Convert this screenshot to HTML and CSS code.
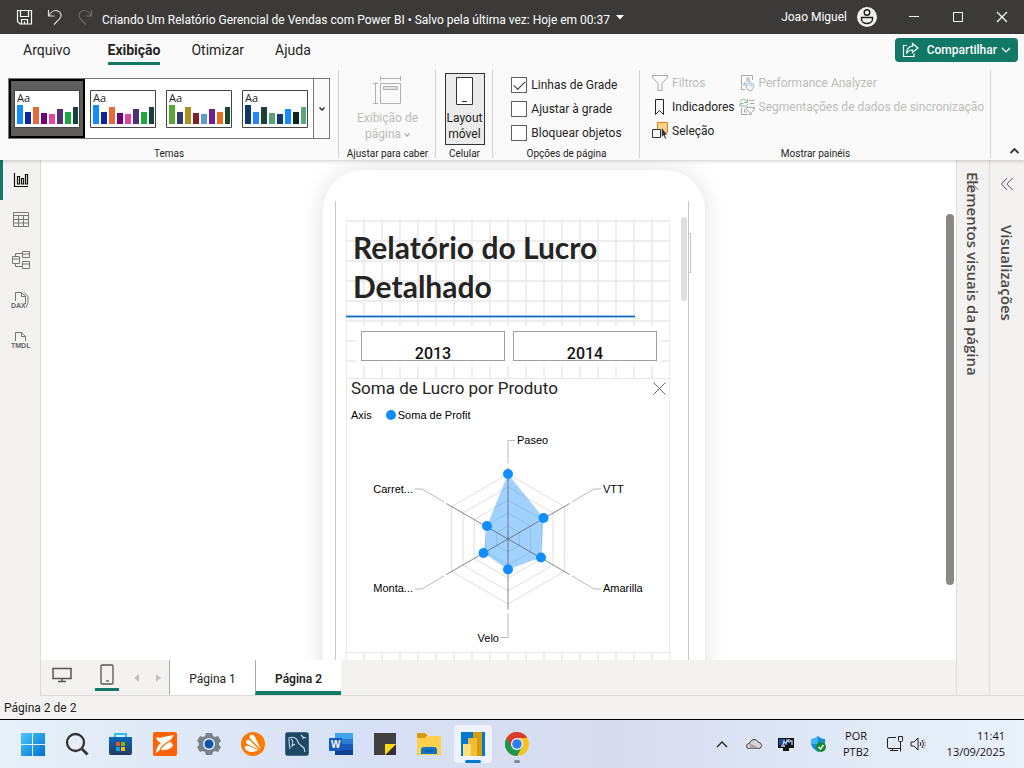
FILE: index.html
```html
<!DOCTYPE html>
<html lang="pt-BR">
<head>
<meta charset="utf-8">
<meta name="viewport" content="width=device-width, initial-scale=1">
<title>Criando Um Relatório Gerencial de Vendas com Power BI</title>
<link rel="stylesheet" href="styles.css">
</head>
<body>
<div class="desktop">
<header class="titlebar">
  <div class="quick">
    <button aria-label="Salvar"><svg width="18" height="18" viewBox="0 0 18 18" fill="none" stroke="#fff" stroke-width="1.2"><path d="M1.500 2.500h14v13.500H4l-2.500-2.500zM4.500 2.500v6h8v-6M5.500 16v-4.500h6V16M8.500 16v-2.500"/></svg></button>
    <button aria-label="Desfazer"><svg width="18" height="18" viewBox="0 0 18 18" fill="none" stroke="#ddd" stroke-width="1.2"><path d="M2.500 2v6h6M2.500 8C5 3.500 9 1.500 12.500 3.200c3 1.600 3.300 5.300 1 7.600L8 16.500"/></svg></button>
    <button aria-label="Refazer"><svg width="18" height="18" viewBox="0 0 18 18" fill="none" stroke="#6d6b69" stroke-width="1.200"><path d="M15.500 2v6h-6M15.500 8C13 3.500 9 1.500 5.500 3.200c-3 1.600-3.300 5.300-1 7.600L10 16.500"/></svg></button>
  </div>
  <h1 class="doc-title">Criando Um Relatório Gerencial de Vendas com Power BI • Salvo pela última vez: Hoje em 00:37</h1>
  <button class="title-caret" aria-label="Opções do arquivo"><svg width="8" height="5" viewBox="0 0 8 5"><path d="M0 0h8L4 4.500z" fill="#fff"/></svg></button>
  <div class="account"><span>Joao Miguel</span>
    <svg width="20" height="20" viewBox="0 0 20 20"><circle cx="10" cy="10" r="10" fill="#f3f2f1"/><g fill="none" stroke="#222" stroke-width="1.400"><circle cx="10" cy="5.500" r="2.800"/><path d="M4.500 10.500h11v1.500c0 6-11 6-11 0z"/></g></svg>
  </div>
  <div class="window-buttons">
    <button aria-label="Minimizar"><svg width="12" height="12" stroke="#fff"><path d="M1 5.500h10"/></svg></button>
    <button aria-label="Maximizar"><svg width="12" height="12" stroke="#fff" fill="none"><path d="M1.500 1.500h9v9h-9z"/></svg></button>
    <button aria-label="Fechar"><svg width="12" height="12" stroke="#fff" stroke-width="1.200"><path d="M1 1l10 10M11 1L1 11"/></svg></button>
  </div>
</header>

<div class="ribbon">
  <div class="menu">
    <nav class="menu-tabs">
      <a href="#">Arquivo</a><a href="#" class="active">Exibição</a><a href="#">Otimizar</a><a href="#">Ajuda</a>
    </nav>
    <button class="share"><svg width="17" height="16" viewBox="0 0 17 16" fill="none" stroke="#fff" stroke-width="1.200"><path d="M5 3.500H1.500v11H12v-3M10.500 1.500L16 6l-5.500 4.500V8C8 8 6 9 4.500 11.500 4.700 7 7 4.500 10.500 4.200z"/></svg><span>Compartilhar</span><svg width="10" height="6" fill="none" stroke="#fff" stroke-width="1.200"><path d="M1 1l4 4 4-4"/></svg></button>
  </div>
  <div class="groups">
    <section class="group themes">
      <div class="gallery">
        <button class="theme selected"><svg viewBox="0 0 66 38" width="66" height="38"><path d="M.5.5h65v37H.5z" fill="#fff" stroke="#444"/><text x="3" y="12">Aa</text><path fill="#118dff" d="M3 15h6v19H3z"/><path fill="#12239e" d="M11 22h6v12h-6z"/><path fill="#e66c37" d="M19 17h6v17h-6z"/><path fill="#6b007b" d="M27 23h6v11h-6z"/><path fill="#e044a7" d="M35 24h6v10h-6z"/><path fill="#502f78" d="M43 19h6v15h-6z"/><path fill="#1aab40" d="M51 22h6v12h-6z"/><path fill="#15423c" d="M59 17h5v17h-5z"/></svg></button>
        <button class="theme"><svg viewBox="0 0 66 38" width="66" height="38"><path d="M.5.5h65v37H.5z" fill="#fff" stroke="#444"/><text x="3" y="12">Aa</text><path fill="#118dff" d="M3 15h6v19H3z"/><path fill="#12239e" d="M11 22h6v12h-6z"/><path fill="#e66c37" d="M19 17h6v17h-6z"/><path fill="#6b007b" d="M27 23h6v11h-6z"/><path fill="#e044a7" d="M35 24h6v10h-6z"/><path fill="#502f78" d="M43 19h6v15h-6z"/><path fill="#1aab40" d="M51 22h6v12h-6z"/><path fill="#15423c" d="M59 17h5v17h-5z"/></svg></button>
        <button class="theme"><svg viewBox="0 0 66 38" width="66" height="38"><path d="M.5.5h65v37H.5z" fill="#fff" stroke="#444"/><text x="3" y="12">Aa</text><path fill="#5aa832" d="M3 15h6v19H3z"/><path fill="#303a6b" d="M11 22h6v12h-6z"/><path fill="#b08f1f" d="M19 17h6v17h-6z"/><path fill="#7f1f27" d="M27 23h6v11h-6z"/><path fill="#5f9ad3" d="M35 24h6v10h-6z"/><path fill="#6b1f90" d="M43 19h6v15h-6z"/><path fill="#e8701a" d="M51 22h6v12h-6z"/><path fill="#174a2c" d="M59 17h5v17h-5z"/></svg></button>
        <button class="theme"><svg viewBox="0 0 66 38" width="66" height="38"><path d="M.5.5h65v37H.5z" fill="#fff" stroke="#444"/><text x="3" y="12">Aa</text><path fill="#10396b" d="M3 15h6v19H3z"/><path fill="#2387ff" d="M11 22h6v12h-6z"/><path fill="#1b423c" d="M19 17h6v17h-6z"/><path fill="#57a472" d="M27 23h6v11h-6z"/><path fill="#10396b" d="M35 24h6v10h-6z"/><path fill="#118dff" d="M43 19h6v15h-6z"/><path fill="#0d2523" d="M51 22h6v12h-6z"/><path fill="#5aa87a" d="M59 17h5v17h-5z"/></svg></button>
        <button class="more" aria-label="Mais temas"><svg width="6" height="4" fill="none" stroke="#333" stroke-width="1.500"><path d="M.5.5L3 3 5.500.5"/></svg></button>
      </div>
      <h2>Temas</h2>
    </section>
    <section class="group">
      <button class="big disabled" disabled><svg width="30" height="30" fill="none" stroke="#b3b1af"><path d="M8.500 7.500h20v20h-20zM8.500 0v5M28.500 0v5M8.500 2.500h20M1 7.500h5M1 27.500h5M3.500 7.500v20"/><path d="M11.500 10.500h14v3h-14z" fill="#e3e2e1"/></svg><span>Exibição de<br>página <svg width="6" height="4" fill="none" stroke="#b3b1af" stroke-width="1.500"><path d="M.5.5L3 3 5.500.5"/></svg></span></button>
      <h2>Ajustar para caber</h2>
    </section>
    <section class="group">
      <button class="big pressed"><svg width="18" height="30" fill="#fff" stroke="#333"><path d="M.5 1.500h16v27H.500zM6 25.500h5"/></svg><span>Layout<br>móvel</span></button>
      <h2>Celular</h2>
    </section>
    <section class="group checks">
      <div class="rows">
        <label><input type="checkbox" checked>Linhas de Grade</label>
        <label><input type="checkbox">Ajustar à grade</label>
        <label><input type="checkbox">Bloquear objetos</label>
      </div>
      <h2>Opções de página</h2>
    </section>
    <section class="group panes">
      <div class="columns">
        <div class="rows">
          <button disabled><svg width="16" height="18" fill="none" stroke="#aaa8a6"><path d="M.5 1.500h15v2L10 9.500v7H6v-7L.5 3.500z"/></svg>Filtros</button>
          <button><svg width="16" height="18" fill="none" stroke="#252423"><path d="M3.500 1.500h8v15l-4-4-4 4z"/></svg>Indicadores</button>
          <button><svg width="16" height="18"><path d="M5.500.5h10v10h-10z" fill="#ffd28a" stroke="#e07a10"/><path d="M.5 7.500h8v8h-8z" fill="#fafafa" stroke="#333"/><path d="M9.500 5v10.500l2-2 1.500 3.500 1.500-.7-1.500-3.300h2.500z" fill="#333" stroke="#fff" stroke-width=".5"/></svg>Seleção</button>
        </div>
        <div class="rows">
          <button disabled><svg width="16" height="18" fill="none" stroke="#aaa8a6"><path d="M6 15.500H2.500v-14h11V6M5 12V9h2v3M8 8V4h2v4"/><g stroke="#88c0e5"><circle cx="11" cy="13" r="3.500"/><path d="M9.500 8h3M11 13l2-2M14 9l1 1"/></g></svg>Performance Analyzer</button>
          <button disabled><svg width="16" height="18" fill="none" stroke="#aaa8a6"><path d="M10 2.500h5.500M11 5.500h4.500M2.500 9.500v7H9M5.500 11v3H8M7 9.500h8.500v2l-3 3v2h-2v-2L7 11z"/><path stroke="#86bd91" d="M1 4c1.500-4 6-3 7 0M8.500 1v3.500H5M9 6C7 9 3 9 1.500 6M1 9V5.500h3.500"/></svg>Segmentações de dados de sincronização</button>
        </div>
      </div>
      <h2>Mostrar painéis</h2>
    </section>
    <button class="collapse" aria-label="Recolher faixa"><svg width="9" height="6" fill="none" stroke="#333" stroke-width="1.800"><path d="M.5 5l4-4 4 4"/></svg></button>
  </div>
</div>

<main class="workspace">
  <nav class="rail">
    <button class="active" aria-label="Relatório"><svg width="18" height="18" fill="none" stroke="#111" stroke-width="1.200"><path d="M2.500 2v13.500H16M5.500 13V5.500h2V13zM9.500 13V7.500h2V13zM13.500 13V3.500h2V13z"/></svg></button>
    <button aria-label="Tabela"><svg width="18" height="18" fill="none" stroke="#777"><path d="M1.500 1.500h15v14h-15zM1.500 4.500h15M1.500 8.500h15M1.500 12h15M6.500 4.500v11M11.500 4.500v11"/></svg></button>
    <button aria-label="Modelo"><svg width="20" height="20" fill="none" stroke="#777"><path d="M1.500 6.500h7v7h-7zM1.500 9h7M11.500 1.500h7v6h-7zM11.500 4h7M11.500 11.500h7v7h-7zM11.500 14h7M4.500 6.500v-3h7M4.500 13.500v3h7"/></svg></button>
    <button aria-label="Consultas DAX"><svg width="20" height="20" viewBox="0 0 20 20" fill="none" stroke="#777"><path d="M4.500 11V2.500h6l4 4V14M10.500 2.500v4h4M13 2.500l4 4v6l-2 5"/><text x="0" y="18">DAX</text></svg></button>
    <button aria-label="TMDL"><svg width="20" height="20" viewBox="0 0 20 20" fill="none" stroke="#777"><path d="M4.500 11V2.500h6l4 4V11M10.500 2.500v4h4"/><text x="0" y="18">TMDL</text></svg></button>
  </nav>
  <div class="center">
    <div class="canvas">
      <div class="phone">
        <div class="screen">
          <div class="page">
            <h2 class="report-title">Relatório do Lucro Detalhado</h2>
            <div class="rule"></div>
            <div class="slicer"><button>2013</button><button>2014</button></div>
            <article class="chart">
              <header><h3>Soma de Lucro por Produto</h3><button aria-label="Remover"><svg width="13" height="13" stroke="#666"><path d="M.5.5l12 12M12.500.5l-12 12"/></svg></button></header>
              <p class="legend"><span>Axis</span><i></i><span>Soma de Profit</span></p>
              <svg class="radar" viewBox="0 0 322 222">
                <g fill="none" stroke="#dedede">
                  <path d="M161 96l11.300 6.500v13L161 122l-11.300-6.500v-13z"/>
                  <path d="M161 83l22.500 13v26L161 135l-22.500-13V96z"/>
                  <path d="M161 70l33.800 19.500v39L161 148l-33.800-19.500v-39z"/>
                  <path d="M161 57l45 26v52l-45 26-45-26V83z"/>
                  <path d="M161 44l56.300 32.500v65L161 174l-56.300-32.500v-65z"/>
                </g>
                <path d="M161 44l35.500 44-2.500 39.500-33 12-24.500-16.500 3.500-27z" fill="#118dff" fill-opacity=".4"/>
                <path d="M161 37.500v142M99.300 73.500l123.400 71M222.700 73.500l-123.400 71" stroke="#555" stroke-opacity=".7"/>
                <path d="M161 33.500V10.500h7M225 72l22-13h7M225 146l22 13h7M161 183.500V207.500h-7M97 72L75 59h-7M97 146l-22 13h-7" fill="none" stroke="#bbb"/>
                <g fill="#118dff"><circle cx="161" cy="44" r="5"/><circle cx="196.500" cy="88" r="5"/><circle cx="194" cy="127.500" r="5"/><circle cx="161" cy="139.500" r="5"/><circle cx="136.500" cy="123" r="5"/><circle cx="140" cy="96" r="5"/></g>
                <g class="labels"><text x="170" y="14">Paseo</text><text x="256" y="63">VTT</text><text x="256" y="162">Amarilla</text><text class="end" x="152" y="212">Velo</text><text class="end" x="66" y="162">Monta...</text><text class="end" x="66" y="63">Carret...</text></g>
              </svg>
            </article>
          </div>
          <div class="screen-thumb"></div>
        </div>
        <div class="side-key"></div>
      </div>
      <div class="canvas-thumb"></div>
    </div>
    <div class="page-tabs">
      <button class="view" aria-label="Área de trabalho"><svg width="20" height="18" fill="none" stroke="#555" stroke-width="1.500"><path d="M1 1.500h18v10H1zM10 12v2.500M6 14.500h8"/></svg></button>
      <button class="view active" aria-label="Celular"><svg width="14" height="22" fill="none" stroke="#555" stroke-width="1.300"><rect x="1" y="2" width="12" height="19" rx="1"/><path d="M6 18h3"/></svg></button>
      <button class="step" aria-label="Anterior"><svg width="5" height="8" fill="#c4c2c0"><path d="M5 0v8L0 4z"/></svg></button>
      <button class="step" aria-label="Próxima"><svg width="5" height="8" fill="#c4c2c0"><path d="M0 0v8l5-4z"/></svg></button>
      <button class="tab">Página 1</button>
      <button class="tab current">Página 2</button>
    </div>
  </div>
  <aside class="pane"><svg width="12" height="12" fill="none" stroke="#777"><path d="M6 0L.5 6 6 12M11.500 0L6 6l5.500 6"/></svg><h2>Elementos visuais da página</h2></aside>
  <aside class="pane visual"><svg width="12" height="12" fill="none" stroke="#4a4a8a"><path d="M6 0L.5 6 6 12M11.500 0L6 6l5.500 6"/></svg><h2>Visualizações</h2></aside>
</main>
<footer class="status">Página 2 de 2</footer>

<div class="taskbar">
  <div class="apps">
    <button aria-label="Iniciar"><svg width="24" height="24"><defs><linearGradient id="win" x2="1" y2="1"><stop stop-color="#4cc8fa"/><stop offset="1" stop-color="#0070cf"/></linearGradient></defs><path fill="url(#win)" d="M0 1h11v11H0zM12 1h12v11H12zM0 13h11v11H0zM12 13h12v11H12z"/></svg></button>
    <button aria-label="Pesquisar"><svg width="24" height="24" fill="none" stroke="#333" stroke-width="2.300"><circle cx="10.500" cy="10.500" r="8.500" fill="#e8eef8"/><path d="M17 17l5.500 5.500" stroke-width="2.800"/></svg></button>
    <button aria-label="Microsoft Store"><svg width="24" height="24"><defs><linearGradient id="store" x2="0" y2="1"><stop stop-color="#0669ba"/><stop offset="1" stop-color="#253a63"/></linearGradient></defs><path d="M6 7V2h11v5" fill="none" stroke="#31bdf2" stroke-width="2"/><path d="M0 5h23v16q0 2-2 2H2q-2 0-2-2z" fill="url(#store)"/><path fill="#f25022" d="M7 10h4v4H7z"/><path fill="#7fba00" d="M12 10h4v4h-4z"/><path fill="#00a4ef" d="M7 15h4v4H7z"/><path fill="#ffb900" d="M12 15h4v4h-4z"/></svg></button>
    <button aria-label="Foxit"><svg width="24" height="24"><rect width="24" height="24" rx="2" fill="#ff6200"/><path fill="#fff" d="M3 5c5 2 10-1 18-2-2 3-3 5-5 6 2 1 3 2 4 4-2 5-8 5-13 5l-4 3c0-4 2-8 5-10-3-1-4-3-5-6z"/><path d="M7 18c2-4 6-7 10-9" fill="none" stroke="#ff6200" stroke-width="1.300"/></svg></button>
    <button aria-label="Configurações"><svg width="24" height="24"><path fill="#77818c" d="M9 1h6l1 3 2 1 3-1 3 5-2 2v2l2 2-3 5-3-1-2 1-1 3H9l-1-3-2-1-3 1-3-5 2-2v-2L0 9l3-5 3 1 2-1z"/><circle cx="12" cy="12" r="6" fill="#e8edf5"/><circle cx="12" cy="12" r="4.500" fill="#0b55a9"/></svg></button>
    <button aria-label="Avast"><svg width="24" height="24"><circle cx="12" cy="12" r="12" fill="#ff7800"/><path fill="#fff" d="M9.500 3c1.500-1.500 3.500 0 4.500 2l6 12.500L9.500 7C8 5.500 8.300 4 9.500 3zM5.500 8.500c1-1.200 2.500-.8 4 .5l9 9-11.500-5.500c-2-1-2.500-2.800-1.500-4zM4 14.500c.8-1.200 2.500-1 4.500-.3l8.500 4c-4 2.300-9 2.300-12-.2C3.700 17 3.300 15.500 4 14.500z"/></svg></button>
    <button aria-label="MySQL Workbench"><svg width="24" height="24"><rect x=".5" y=".5" width="23" height="23" rx="2" fill="#1d4866" stroke="#416d8b"/><path d="M5 17c-1-4-1-7-1-11 4-2 8 0 9 4 1 3 4 4 6 6l1 4M6 7c2 1 2 4 1 7l3-2M16 3l2 2 3 1M18 5v2" fill="none" stroke="#c9dce6" stroke-width="1.100"/></svg></button>
    <button aria-label="Word"><svg width="24" height="24"><path fill="#41a5ee" d="M6 1h18v6H6z"/><path fill="#2b7cd3" d="M6 7h18v5H6z"/><path fill="#185abd" d="M6 12h18v6H6z"/><path fill="#103f91" d="M6 18h18v5H6z"/><rect y="6" width="13" height="13" rx="1" fill="#185abd"/><text x="2" y="16" class="word">W</text></svg></button>
    <button aria-label="Notas Autoadesivas"><svg width="24" height="24"><path fill="#404040" d="M1 1h22v11L12 23H1z"/><path fill="#333" d="M12 23h11V12z"/><path fill="#ffda10" d="M12 12h11L12 23z"/></svg></button>
    <button aria-label="Explorador de Arquivos"><svg width="24" height="24"><path fill="#d99a0b" d="M0 1h8l3 3h-2v8H0z"/><path fill="#ffd04b" d="M0 6h8l3-2h13v19H0z"/><path fill="#1273c4" d="M4 22v-4q0-3 3-3h10q3 0 3 3v4z"/><path d="M8 19h8" stroke="#0a4f92"/></svg></button>
    <button class="open" aria-label="Power BI Desktop"><svg width="24" height="24"><path fill="#0078d4" d="M0 0h24v24H0z"/><path fill="#d99a0b" d="M12 0h9v24h-9z"/><path fill="#f0bd35" d="M7 6h9v18H7z"/><path fill="#fbe07c" d="M2 12h8v12H2z"/></svg></button>
    <button class="running" aria-label="Google Chrome"><svg width="24" height="24"><circle cx="12" cy="12" r="12" fill="#fcc31e"/><path fill="#1f9650" d="M1.600 6A12 12 0 0 0 12 24l5.200-9-5.200 1z"/><path fill="#dc3a2d" d="M1.600 6A12 12 0 0 1 22.400 6H12L6.800 15z"/><circle cx="12" cy="12" r="6" fill="#fff"/><circle cx="12" cy="12" r="4.800" fill="#2f7ced"/></svg></button>
  </div>
  <div class="tray">
    <button aria-label="Ícones ocultos"><svg width="16" height="16" fill="none" stroke="#222" stroke-width="1.400"><path d="M3 11l5-5 5 5"/></svg></button>
    <button aria-label="OneDrive"><svg width="16" height="16"><path d="M3.500 12.500C-1 12.500 0 7.500 3.500 7.500 5 2.500 11 2.500 12.500 6.500c4 0 4 6 0 6z" fill="#d4d4d4" stroke="#333"/><path d="M4 8l9 4.500H3.500" fill="#aaa" stroke="#777" stroke-width=".5"/></svg></button>
    <button aria-label="Monitor"><svg width="16" height="16"><path fill="#111" d="M0 2h16v10H0zM5 12h6v3H5z"/><path d="M1 3h6v6H1z" fill="#144b9d"/><path d="M5 9l1-4 2 3 1-4 2 2V3M3 10h4M12 5h2v4" fill="none" stroke="#b5d3f4" stroke-width="1.300"/></svg></button>
    <button aria-label="Segurança"><svg width="16" height="16"><path fill="#168bd9" d="M1 3c3 0 5-1 7-3 2 2 4 3 7 3v4c0 4-4 7-7 9-3-2-7-5-7-9z"/><path fill="#41b4ee" d="M1 3c3 0 5-1 7-3v8H1z"/><circle cx="11" cy="11" r="5" fill="#178a2f"/><path d="M8.500 11l2 2 3-4" fill="none" stroke="#fff" stroke-width="1.400"/></svg></button>
    <p class="lang">POR<br>PTB2</p>
    <button class="net" aria-label="Rede"><svg width="18" height="18" fill="none" stroke="#222"><path d="M10 2.500H3q-1.500 0-1.500 1.500v8q0 1.500 1.500 1.500h11M4 15.500h8M6.500 13.500v2M12.500 1.500h4v4q0 1-1 1h-2q-1 0-1-1zM14.500 6.500v10"/></svg></button>
    <button class="vol" aria-label="Volume"><svg width="16" height="16" fill="none" stroke="#222"><path d="M1 6h3l4-4v12l-4-4H1zM10 6q1.500 2 0 4M12 4q3 4 0 8"/><path stroke="#aaa" d="M14 3q3 5 0 10"/></svg></button>
    <p class="clock">11:41<br>13/09/2025</p>
  </div>
</div>
</div>
</body>
</html>
```
FILE: styles.css
```css
* { box-sizing: border-box; }
body, h1, h2, h3, p { margin: 0; font-weight: 400; }
body { font: 12px/16px Roboto, "Open Sans", sans-serif; color: #252423; }
button { padding: 0; border: 0; background: none; font: inherit; color: inherit; }
a { color: inherit; text-decoration: none; }
svg { display: block; flex: none; }
.desktop { height: 100vh; display: flex; flex-direction: column; overflow: hidden; background: #fff; }

.titlebar { height: 34px; flex: none; display: flex; align-items: center; background: #3b3a39; color: #fff; }
.quick { display: flex; gap: 12px; padding: 0 8px 0 16px; }
.doc-title { font-size: 12px; white-space: nowrap; padding-top: 6px; }
.title-caret { margin-left: 6px; }
.account { display: flex; align-items: center; gap: 10px; margin-left: auto; }
.window-buttons { display: flex; margin-left: 15px; }
.window-buttons button { width: 44px; height: 34px; display: grid; place-items: center; }

.ribbon { flex: none; background: #fafafa; box-shadow: 0 1px 4px #0003; position: relative; z-index: 2; }
.menu { display: flex; justify-content: space-between; height: 34px; padding: 0 6px 0 23px; }
.menu-tabs { display: flex; gap: 31px; font-size: 14px; line-height: 20px; }
.menu-tabs a { padding-top: 6px; height: 31px; }
.menu-tabs .active { margin-left: 6px; font-weight: 700; border-bottom: 3px solid #117865; }
.share { display: flex; align-items: center; gap: 8px; height: 24px; margin-top: 4px; padding: 0 7px; background: #117865; color: #fff; border-radius: 4px; font-weight: 500; }
.share span { margin-right: -4px; }
.groups { display: grid; grid-template-columns: 339px 97px 57px 147px 351px 1fr; height: 92px; }
.group { display: flex; flex-direction: column; align-items: center; position: relative; padding-top: 5px; }
.group::after { content: ""; position: absolute; right: 0; top: 2px; bottom: 2px; width: 1px; background: #d6d4d2; }
.group h2 { font-size: 10px; line-height: 12px; margin-top: auto; white-space: nowrap; }
.themes { padding-right: 1px; }
.gallery { display: flex; width: 322px; height: 61px; margin: 5px 0 0; background: #fff; border: 1px solid #7a7876; }
.theme { width: 76px; flex: none; display: grid; place-items: center; }
.theme text { font: 11px "Open Sans", sans-serif; fill: #222; }
.theme.selected { background: #5f5e5d; border: 2px solid #000; }
.more { flex: 1; display: grid; place-items: center; border-left: 1px solid #7a7876; background: #fafafa; }
.big { display: flex; flex-direction: column; align-items: center; gap: 4px; height: 72px; padding-top: 3px; text-align: center; white-space: nowrap; }
.big span svg { display: inline-block; vertical-align: middle; }
.disabled, .panes button:disabled { color: #bdbbb9; }
.pressed { width: 40px; border: 1px solid #333; background: #ebebeb; padding-top: 2px; }
.rows { display: flex; flex-direction: column; }
.rows label, .rows button { display: flex; align-items: center; height: 24px; white-space: nowrap; }
.rows label { gap: 4px; }
.rows input { appearance: none; width: 16px; height: 16px; margin: 0; border: 1px solid #605e5c; background: #fff; display: grid; place-items: center; }
.rows input:checked::after { content: ""; width: 10px; height: 5px; border: solid #333; border-width: 0 0 1px 1px; transform: translateY(-1px) rotate(-45deg); }
.columns { display: flex; align-self: flex-start; gap: 4px; padding-left: 12px; }
.panes .rows { margin-top: -2px; }
.panes .rows button { gap: 4px; }
.collapse { align-self: end; justify-self: end; margin: 0 5px 6px 0; }

.workspace { flex: 1; min-height: 0; display: flex; background: #fff; }
.rail { width: 41px; background: #f3f2f1; border-right: 1px solid #dddbd9; }
.rail button { width: 100%; height: 40px; padding-left: 2px; display: grid; place-items: center; }
.rail .active { box-shadow: inset 3px 0 #117865; }
.rail text { font: 700 7px "Liberation Sans", sans-serif; fill: #666; stroke: none; }
.center { flex: 1; min-width: 0; display: flex; flex-direction: column; }
.canvas { flex: 1; min-height: 0; overflow: hidden; position: relative; padding: 10px 0 0 31px; }
.phone { width: 382px; height: 700px; margin: 0 auto; padding: 31px 16px 0 12px; border-radius: 40px; background: #fff; box-shadow: 0 0 24px #0000001f; position: relative; }
.screen { position: relative; height: 100%; border: solid #c8c6c4; border-width: 0 1px; padding: 18px 18px 0 10px; }
.page { min-height: 600px; background: linear-gradient(#ededed, #ededed) 0 0 / 1px 100% no-repeat, linear-gradient(#ededed, #ededed) 100% 0 / 1px 100% no-repeat, linear-gradient(#ededed 2px, transparent 2px) 0 1px / 100% 20px, linear-gradient(90deg, #ededed 2px, transparent 2px) 17px 0 / 18px 100%; }
.report-title { height: 96px; padding: 9px 8px 0 7px; font: 700 30px/39px Lato, sans-serif; color: #252423; }
.rule { width: 289px; height: 3px; background: #1068bf; border: solid #9cc4ea; border-width: 1px 0; }
.slicer { display: flex; gap: 8px; margin: 8px 8px 12px 10px; padding: 5px; background: #fff; }
.slicer button { flex: 1; height: 30px; border: 1px solid #a19f9d; font: 500 16px/12px Roboto, sans-serif; color: #111; padding-top: 16px; }
.chart { border: 1px solid #e8e8e8; background: #fff; }
.chart header { display: flex; justify-content: space-between; align-items: center; height: 19px; padding: 0 3px 0 4px; }
.chart h3 { font: 400 17px/19px Roboto, sans-serif; white-space: nowrap; }
.legend { display: flex; align-items: center; height: 32px; padding: 1px 0 0 4px; font: 11px "Liberation Sans", sans-serif; color: #000; }
.legend i { width: 10px; height: 10px; margin: 0 2px 0 14px; border-radius: 50%; background: #118dff; }
.radar { width: 100%; }
.labels { font: 11px "Liberation Sans", sans-serif; }
.end { text-anchor: end; }
.screen-thumb { position: absolute; right: 1px; top: 16px; width: 6px; height: 84px; border-radius: 3px; background: #e1dfdd; }
.side-key { position: absolute; right: 14px; top: 63px; width: 3px; height: 40px; border: 1px solid #c8c6c4; border-left: 0; }
.canvas-thumb { position: absolute; right: 2px; top: 54px; width: 8px; height: 371px; border-radius: 4px; background: #8a8886; }
.page-tabs { flex: none; display: flex; height: 36px; background: #f3f2f1; border-bottom: 1px solid #dddbd9; }
.view { width: 24px; height: 31px; display: grid; place-items: center; margin-left: 9px; }
.view + .view { margin: 0 6px 0 21px; }
.view.active { border-bottom: 3px solid #117865; }
.step { width: 22px; display: grid; place-items: center; }
.page-tabs .tab { min-width: 86px; padding: 2px 19px 0; background: #fff; border-left: 1px solid #aaa8a6; }
.page-tabs .current { font-weight: 600; border-bottom: 4px solid #117865; padding-top: 6px; }
.pane { width: 33px; background: #f3f2f1; border: solid #dddbd9; border-width: 0 0 1px 1px; display: grid; justify-items: center; align-content: start; padding-top: 12px; color: #4b4947; }
.pane svg, .pane h2 { grid-area: 1 / 1; }
.pane svg { margin-top: 6px; }
.pane h2 { writing-mode: vertical-rl; font: 600 15px/20px "Open Sans", sans-serif; white-space: nowrap; }
.visual { width: 35px; }
.visual h2 { margin-top: 53px; }
.status { flex: none; height: 23px; padding: 4px; background: #f3f2f1; }

.taskbar { flex: none; height: 49px; display: flex; justify-content: space-between; border-top: 1px solid #000; background: linear-gradient(90deg, #e6f0f9, #d7e1f5 35%, #d7dbee 60%, #dfe8f6 80%, #e8f2fb); }
.apps { display: flex; padding-left: 11px; }
.apps button { width: 44px; display: grid; place-items: center; position: relative; }
.apps .open::before { content: ""; position: absolute; inset: 5px 3px; border-radius: 4px; background: #edf2fb; }
.apps svg { position: relative; }
.apps .open::after, .apps .running::after { content: ""; position: absolute; bottom: 5px; width: 16px; height: 3px; border-radius: 2px; background: #0078d4; }
.apps .running::after { width: 6px; background: #858995; }
.word { font: 700 10px "Liberation Sans", sans-serif; fill: #fff; }
.tray { display: flex; align-items: center; gap: 16px; padding-right: 19px; font: 11px/16px "Open Sans", sans-serif; color: #111; }
.lang { text-align: center; width: 28px; }
.vol { margin-left: -10px; }
.clock { text-align: right; width: 63px; }
```
